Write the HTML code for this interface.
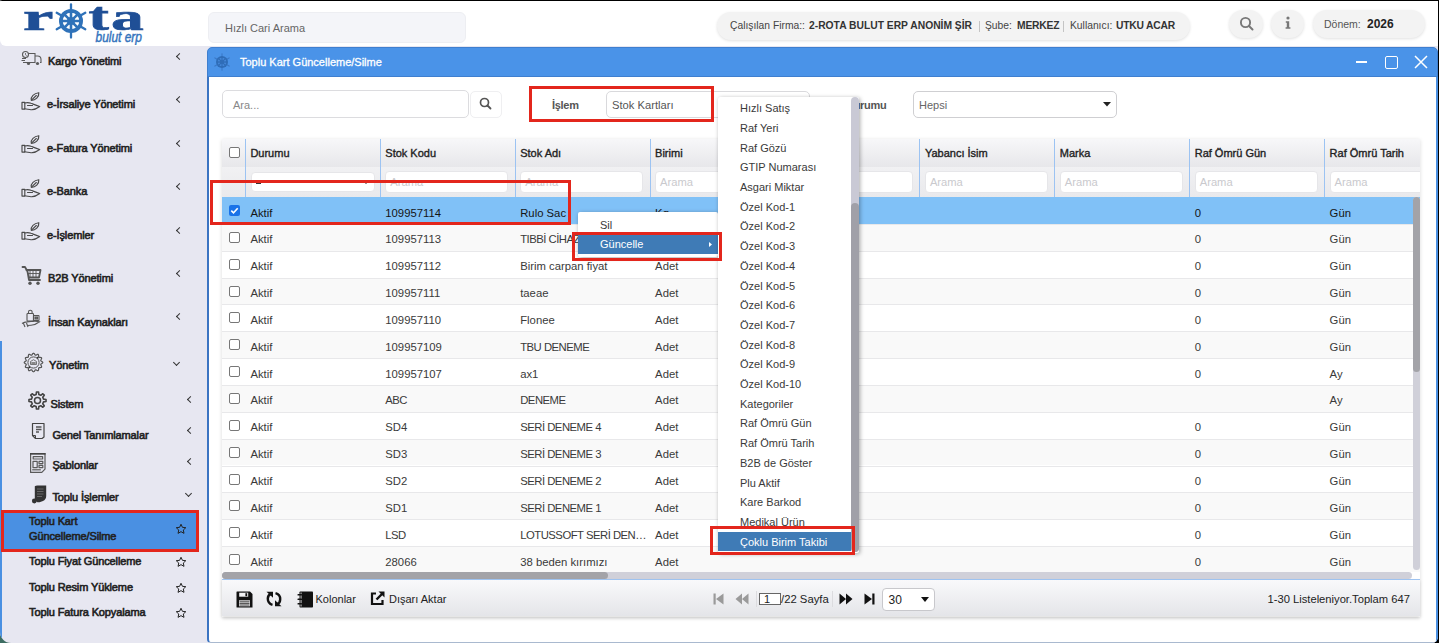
<!DOCTYPE html>
<html><head><meta charset="utf-8">
<style>
*{box-sizing:border-box;margin:0;padding:0}
html,body{width:1439px;height:643px;overflow:hidden;background:#000;font-family:"Liberation Sans",sans-serif;color:#222}
.a{position:absolute}
.t{position:absolute;white-space:nowrap;line-height:1}
#app{position:absolute;left:0;top:0;width:1438px;height:643px;background:#e7e7f1;border-radius:2px 0 6px 11px;overflow:hidden}
#corner{position:absolute;left:0;top:620px;width:30px;height:23px;background:#3d6d62}
.sb{font-weight:400;font-size:11px;letter-spacing:-0.12px;color:#222;-webkit-text-stroke:0.6px #222}
.chev{position:absolute;width:5px;height:5px;border-left:1.3px solid #333;border-bottom:1.3px solid #333;transform:rotate(45deg)}
.chevd{position:absolute;width:5px;height:5px;border-left:1.3px solid #333;border-bottom:1.3px solid #333;transform:rotate(-45deg)}
.cell{position:absolute;white-space:nowrap;line-height:1;font-size:11.3px;color:#3a3a3a}
.hd{position:absolute;white-space:nowrap;line-height:1;font-size:11px;font-weight:400;letter-spacing:0px;color:#222;-webkit-text-stroke:0.35px #222}
.flt{position:absolute;height:21px;background:#fff;border:1px solid #e6e6e9;border-radius:4px}
.ph{position:absolute;white-space:nowrap;line-height:1;font-size:11.2px;color:#c9c9cd}
.cb{position:absolute;width:11px;height:11px;border:1px solid #777;border-radius:2px;background:#fff}
.mi{position:absolute;white-space:nowrap;line-height:1;font-size:11px;color:#3a3a3a}
.star{position:absolute}
</style></head><body>
<div id="corner"></div>
<div id="app">

<div class="a" style="left:0;top:0;width:1438px;height:46px;background:#fff;border-radius:0 0 0 6px"></div>
<svg class="a" style="left:20px;top:2px" width="130" height="43" viewBox="0 0 130 43">
 <g font-family="Liberation Serif" font-weight="700" font-size="36" fill="#1f4f96" stroke="#1f4f96" stroke-width="0.6">
 <text x="3" y="28" textLength="30.5" lengthAdjust="spacingAndGlyphs" transform="translate(0,28) scale(1,1.04) translate(0,-28)">r</text>
 <text x="68.6" y="28" textLength="20.4" lengthAdjust="spacingAndGlyphs" transform="translate(0,28.5) scale(1,1.14) translate(0,-28.5)">t</text>
 <text x="91" y="28" textLength="32.8" lengthAdjust="spacingAndGlyphs" transform="translate(0,28) scale(1,1.04) translate(0,-28)">a</text>
 </g>
 <g transform="translate(51,19)">
  <g stroke="#2f72b9" stroke-width="2.3" stroke-linecap="round">
   <line x1="0" y1="-16.5" x2="0" y2="16.5"/>
   <line x1="-14.3" y1="-8.25" x2="14.3" y2="8.25"/>
   <line x1="-14.3" y1="8.25" x2="14.3" y2="-8.25"/>
  </g>
  <circle r="12" fill="#2f72b9"/>
  <circle r="8.3" fill="#fff"/>
  <g stroke="#2f72b9" stroke-width="2.6">
   <line x1="0" y1="-9" x2="0" y2="9"/><line x1="-9" y1="0" x2="9" y2="0"/>
   <line x1="-6.4" y1="-6.4" x2="6.4" y2="6.4"/><line x1="-6.4" y1="6.4" x2="6.4" y2="-6.4"/>
  </g>
  <circle r="4" fill="#2f72b9"/>
 </g>
 <text x="75.5" y="40" font-family="Liberation Sans" font-style="italic" font-size="14.5" fill="#3474bd" stroke="#3474bd" stroke-width="0.45" textLength="46.5" lengthAdjust="spacingAndGlyphs">bulut erp</text>
</svg>
<div class="a" style="left:208px;top:12px;width:258px;height:30.5px;background:#f4f5f9;border:1px solid #edeef2;border-radius:6px"></div>
<div class="t" style="left:225px;top:23px;font-size:11px;color:#666">Hızlı Cari Arama</div>
<div class="a" style="left:717px;top:12px;width:473px;height:28px;background:#f3f3f3;border-radius:14px;box-shadow:0 1px 3px rgba(0,0,0,0.12)"></div>
<div class="t" style="left:730px;top:21px;font-size:10.3px;color:#444">Çalışılan Firma::</div>
<div class="t" style="left:809px;top:21px;font-size:10.3px;font-weight:700;color:#333;letter-spacing:0px">2-ROTA BULUT ERP ANONİM ŞİR</div>
<div class="a" style="left:979px;top:20.5px;width:1px;height:11px;background:#c4c4c4"></div>
<div class="t" style="left:985px;top:21px;font-size:10.3px;color:#444">Şube:</div>
<div class="t" style="left:1017px;top:21px;font-size:10.3px;font-weight:700;color:#333;letter-spacing:-0.2px">MERKEZ</div>
<div class="a" style="left:1063px;top:20.5px;width:1px;height:11px;background:#c4c4c4"></div>
<div class="t" style="left:1070px;top:21px;font-size:10.3px;color:#444">Kullanıcı:</div>
<div class="t" style="left:1116px;top:21px;font-size:10.3px;font-weight:700;color:#333;letter-spacing:-0.2px">UTKU ACAR</div>
<div class="a" style="left:1229px;top:10px;width:34px;height:28px;background:#f3f3f3;border-radius:14px;box-shadow:0 1px 3px rgba(0,0,0,0.12)"></div>
<svg class="a" style="left:1239px;top:16px" width="16" height="16" viewBox="0 0 16 16"><circle cx="6.5" cy="6.5" r="4.6" fill="none" stroke="#777" stroke-width="1.9"/><line x1="10" y1="10" x2="13.5" y2="13.5" stroke="#777" stroke-width="2" stroke-linecap="round"/></svg>
<div class="a" style="left:1271px;top:10px;width:33px;height:28px;background:#f3f3f3;border-radius:14px;box-shadow:0 1px 3px rgba(0,0,0,0.12)"></div>
<svg class="a" style="left:1282px;top:16px" width="12" height="14" viewBox="0 0 12 14"><circle cx="6" cy="2" r="1.6" fill="#777"/><path d="M3.8 5.2h3.4v6h1.2v1.6H3.6v-1.6h1.2V6.8h-1z" fill="#777"/></svg>
<div class="a" style="left:1313px;top:10px;width:112px;height:28px;background:#f3f3f3;border-radius:14px;box-shadow:0 1px 3px rgba(0,0,0,0.12)"></div>
<div class="t" style="left:1324px;top:19px;font-size:10.5px;color:#555">Dönem:</div>
<div class="t" style="left:1367px;top:18px;font-size:12px;font-weight:700;color:#222">2026</div>
<div class="a" style="left:0;top:341px;width:2px;height:301px;background:#4a90e2"></div>
<div class="t sb" style="left:48px;top:55.8px">Kargo Yönetimi</div>
<div class="chev" style="left:177px;top:53.5px"></div>
<div class="t sb" style="left:47px;top:99.3px">e-İrsaliye Yönetimi</div>
<div class="chev" style="left:177px;top:97.0px"></div>
<div class="t sb" style="left:47px;top:142.8px">e-Fatura Yönetimi</div>
<div class="chev" style="left:177px;top:140.5px"></div>
<div class="t sb" style="left:47px;top:186.3px">e-Banka</div>
<div class="chev" style="left:177px;top:184.0px"></div>
<div class="t sb" style="left:47px;top:229.8px">e-İşlemler</div>
<div class="chev" style="left:177px;top:227.5px"></div>
<div class="t sb" style="left:48px;top:273.1px">B2B Yönetimi</div>
<div class="chev" style="left:177px;top:270.8px"></div>
<div class="t sb" style="left:48px;top:316.5px">İnsan Kaynakları</div>
<div class="chev" style="left:177px;top:314.2px"></div>
<div class="t sb" style="left:49px;top:359.8px">Yönetim</div>
<div class="chevd" style="left:174px;top:359.5px"></div>
<div class="t sb" style="left:50.5px;top:398.7px">Sistem</div>
<div class="chev" style="left:188px;top:397.3px"></div>
<div class="t sb" style="left:52.4px;top:429.59999999999997px">Genel Tanımlamalar</div>
<div class="chev" style="left:188px;top:428.2px"></div>
<div class="t sb" style="left:52.4px;top:460.4px">Şablonlar</div>
<div class="chev" style="left:188px;top:459px"></div>
<div class="t sb" style="left:52.4px;top:491.7px">Toplu İşlemler</div>
<div class="chevd" style="left:185.5px;top:491.3px"></div>
<svg class="a" style="left:21px;top:50px" width="21" height="16" viewBox="0 0 21 16"><g fill="none" stroke="#5a5a5a" stroke-width="1.1"><circle cx="4.5" cy="4.5" r="3"/><path d="M7 3.5h7v9H6"/><path d="M14 6h2.5a3.5 3.5 0 0 1 3.5 3.5v3h-1"/><path d="M1 8.5h4M0.5 10.5h3.5M2 12.5h4" /></g><circle cx="7.5" cy="13.5" r="1.6" fill="#5a5a5a"/><circle cx="16.5" cy="13.5" r="1.6" fill="#5a5a5a"/><path d="M4.5 3v1.8l1.2 0.8" stroke="#5a5a5a" stroke-width="0.8" fill="none"/></svg>
<svg class="a" style="left:21px;top:90.5px" width="20" height="21" viewBox="0 0 20 21"><g fill="none" stroke="#4a4a4a" stroke-width="1.15" stroke-linejoin="round" stroke-linecap="round"><path d="M10.3 9.4C9.5 5.5 13 2.3 17.8 1.7C18.3 6 14.5 9.2 10.3 9.4Z"/><path d="M11 8.7L15.3 4.5"/><rect x="1" y="11.3" width="2.8" height="6.8"/><path d="M3.8 12C6 11.3 8 11.5 10 12.3C12 13 14 14 18.7 15.5C16 17.6 13 18.9 10 18.7C8 18.6 6 17.9 3.8 17.7"/><path d="M6.5 14.5H11.5"/></g></svg>
<svg class="a" style="left:21px;top:134px" width="20" height="21" viewBox="0 0 20 21"><g fill="none" stroke="#4a4a4a" stroke-width="1.15" stroke-linejoin="round" stroke-linecap="round"><path d="M10.3 9.4C9.5 5.5 13 2.3 17.8 1.7C18.3 6 14.5 9.2 10.3 9.4Z"/><path d="M11 8.7L15.3 4.5"/><rect x="1" y="11.3" width="2.8" height="6.8"/><path d="M3.8 12C6 11.3 8 11.5 10 12.3C12 13 14 14 18.7 15.5C16 17.6 13 18.9 10 18.7C8 18.6 6 17.9 3.8 17.7"/><path d="M6.5 14.5H11.5"/></g></svg>
<svg class="a" style="left:21px;top:177.5px" width="20" height="21" viewBox="0 0 20 21"><g fill="none" stroke="#4a4a4a" stroke-width="1.15" stroke-linejoin="round" stroke-linecap="round"><path d="M10.3 9.4C9.5 5.5 13 2.3 17.8 1.7C18.3 6 14.5 9.2 10.3 9.4Z"/><path d="M11 8.7L15.3 4.5"/><rect x="1" y="11.3" width="2.8" height="6.8"/><path d="M3.8 12C6 11.3 8 11.5 10 12.3C12 13 14 14 18.7 15.5C16 17.6 13 18.9 10 18.7C8 18.6 6 17.9 3.8 17.7"/><path d="M6.5 14.5H11.5"/></g></svg>
<svg class="a" style="left:21px;top:221px" width="20" height="21" viewBox="0 0 20 21"><g fill="none" stroke="#4a4a4a" stroke-width="1.15" stroke-linejoin="round" stroke-linecap="round"><path d="M10.3 9.4C9.5 5.5 13 2.3 17.8 1.7C18.3 6 14.5 9.2 10.3 9.4Z"/><path d="M11 8.7L15.3 4.5"/><rect x="1" y="11.3" width="2.8" height="6.8"/><path d="M3.8 12C6 11.3 8 11.5 10 12.3C12 13 14 14 18.7 15.5C16 17.6 13 18.9 10 18.7C8 18.6 6 17.9 3.8 17.7"/><path d="M6.5 14.5H11.5"/></g></svg>
<svg class="a" style="left:21px;top:265px" width="21" height="21" viewBox="0 0 21 21"><g fill="none" stroke="#555" stroke-width="1.8" stroke-linecap="round" stroke-linejoin="round"><path d="M1.5 2h2.5l2.5 4.5l1.5 8.5h11"/><path d="M5.5 5h14l-1.5 7.5H8"/></g><g stroke="#555" stroke-width="0.9"><path d="M9 5.5v7M12 5.5v7M15 5.5v7M6.5 8.5h12.5"/></g><circle cx="9" cy="18.2" r="1.7" fill="#555"/><circle cx="17" cy="18.2" r="1.7" fill="#555"/></svg>
<svg class="a" style="left:21px;top:309px" width="21" height="20" viewBox="0 0 21 20"><g fill="none" stroke="#555" stroke-width="1.1"><path d="M7.5 4.5V3a1.8 1.8 0 0 1 3.6 0v1.5"/><rect x="6" y="4.5" width="6.5" height="7.5" rx="0.8"/><rect x="12.5" y="6.5" width="5.5" height="5" rx="0.5"/><rect x="14" y="8" width="2.5" height="2" fill="#777"/><path d="M1 14.5c1.5-1 3-1.5 5-1.6l4 -0.4c2 0 4 -0.8 8.5 0.3c-2.5 2-5 3.3-8.5 3.4l-3.5 0.3M2.5 14.5l1.5 3.5M5.5 14l1.5 4"/></g></svg>
<svg class="a" style="left:22.5px;top:352px" width="21" height="21" viewBox="0 0 21 21"><path d="M10.50 1.20 L11.09 1.48 L11.60 2.17 L12.01 2.89 L12.44 3.26 L13.00 3.15 L13.71 2.74 L14.50 2.40 L15.15 2.45 L15.52 2.99 L15.61 3.84 L15.62 4.66 L15.80 5.20 L16.34 5.38 L17.16 5.39 L18.01 5.48 L18.55 5.85 L18.60 6.50 L18.26 7.29 L17.85 8.00 L17.74 8.56 L18.11 8.99 L18.83 9.40 L19.52 9.91 L19.80 10.50 L19.52 11.09 L18.83 11.60 L18.11 12.01 L17.74 12.44 L17.85 13.00 L18.26 13.71 L18.60 14.50 L18.55 15.15 L18.01 15.52 L17.16 15.61 L16.34 15.62 L15.80 15.80 L15.62 16.34 L15.61 17.16 L15.52 18.01 L15.15 18.55 L14.50 18.60 L13.71 18.26 L13.00 17.85 L12.44 17.74 L12.01 18.11 L11.60 18.83 L11.09 19.52 L10.50 19.80 L9.91 19.52 L9.40 18.83 L8.99 18.11 L8.56 17.74 L8.00 17.85 L7.29 18.26 L6.50 18.60 L5.85 18.55 L5.48 18.01 L5.39 17.16 L5.38 16.34 L5.20 15.80 L4.66 15.62 L3.84 15.61 L2.99 15.52 L2.45 15.15 L2.40 14.50 L2.74 13.71 L3.15 13.00 L3.26 12.44 L2.89 12.01 L2.17 11.60 L1.48 11.09 L1.20 10.50 L1.48 9.91 L2.17 9.40 L2.89 8.99 L3.26 8.56 L3.15 8.00 L2.74 7.29 L2.40 6.50 L2.45 5.85 L2.99 5.48 L3.84 5.39 L4.66 5.38 L5.20 5.20 L5.38 4.66 L5.39 3.84 L5.48 2.99 L5.85 2.45 L6.50 2.40 L7.29 2.74 L8.00 3.15 L8.56 3.26 L8.99 2.89 L9.40 2.17 L9.91 1.48 L10.50 1.20Z" fill="none" stroke="#555" stroke-width="1.2" stroke-linejoin="round"/><circle cx="10.5" cy="10.5" r="5.6" fill="none" stroke="#555" stroke-width="1"/><path d="M7.5 12.5v-3l3-1.8l3 1.8v3z" fill="none" stroke="#666" stroke-width="0.9"/><rect x="8.3" y="10" width="4.4" height="2.2" fill="#888"/><circle cx="14.6" cy="5.8" r="1" fill="#333"/><circle cx="6.4" cy="15.2" r="1" fill="#333"/></svg>
<svg class="a" style="left:27.5px;top:390.5px" width="19" height="19" viewBox="0 0 19 19"><path d="M8.15 3.45 L8.47 0.96 L10.53 0.96 L10.85 3.45 L12.82 4.26 L14.81 2.73 L16.27 4.19 L14.74 6.18 L15.55 8.15 L18.04 8.47 L18.04 10.53 L15.55 10.85 L14.74 12.82 L16.27 14.81 L14.81 16.27 L12.82 14.74 L10.85 15.55 L10.53 18.04 L8.47 18.04 L8.15 15.55 L6.18 14.74 L4.19 16.27 L2.73 14.81 L4.26 12.82 L3.45 10.85 L0.96 10.53 L0.96 8.47 L3.45 8.15 L4.26 6.18 L2.73 4.19 L4.19 2.73 L6.18 4.26Z" fill="none" stroke="#444" stroke-width="1.6" stroke-linejoin="round"/><circle cx="9.5" cy="9.5" r="3" fill="none" stroke="#444" stroke-width="1.5"/></svg>
<svg class="a" style="left:30.5px;top:422px" width="15" height="18" viewBox="0 0 15 18"><path d="M1.5 1.5h11.5v13.5l-2 1.5H4.5l-3-3z" fill="none" stroke="#444" stroke-width="1.2" stroke-linejoin="round"/><path d="M1.5 13.5h3v3" fill="none" stroke="#444" stroke-width="1"/><path d="M5 5h5.5M5 7.5h5.5M5 10h3" stroke="#555" stroke-width="1.3"/></svg>
<svg class="a" style="left:29px;top:451.5px" width="18" height="22" viewBox="0 0 18 22"><g fill="none" stroke="#5a5a5a" stroke-width="1.2" stroke-linejoin="round"><path d="M1.6 1.6h14.4v15.5l-3.2 3.3H1.6z"/><rect x="4.2" y="4.6" width="9.4" height="2.4"/><rect x="4" y="9.4" width="4.2" height="6.2"/><rect x="10" y="9.4" width="3.8" height="2.2"/><rect x="10" y="13.4" width="3.8" height="2.2"/><path d="M3.2 17.8h8.6"/></g><rect x="1" y="1" width="15.6" height="1.6" fill="#444"/></svg>
<svg class="a" style="left:30px;top:483.5px" width="18" height="20" viewBox="0 0 18 20"><path d="M4.8 2.2c0.6-0.5 1.5-0.7 2.5-0.7h8.9v10.5c0 2.5-1.2 4.2-3.2 4.9l-3.5 1.3c-1.5 0.5-3.3-0.4-3.9-1.8L4.8 15z" fill="#333"/><path d="M7 5h6.5M7 7.5h6.5M7 10h6.5M7 12.5h5" stroke="#666" stroke-width="1.1"/><circle cx="4.3" cy="17" r="2.4" fill="#333"/></svg>
<div class="a" style="left:1px;top:509.5px;width:198px;height:42.5px;background:#4a90e2;border:3px solid #e3261c"></div>
<div class="t sb" style="left:29px;top:516px">Toplu Kart</div>
<div class="t sb" style="left:29px;top:531px">Güncelleme/Silme</div>
<svg class="star" style="left:175px;top:522.5px" width="12" height="12" viewBox="0 0 24 24"><path d="M12 2.5l2.9 6.2 6.7.7-5 4.6 1.4 6.7L12 17.3l-5.9 3.4 1.4-6.7-5-4.6 6.7-.7z" fill="none" stroke="#222" stroke-width="2" stroke-linejoin="round"/></svg>
<div class="t sb" style="left:29px;top:556.4px">Toplu Fiyat Güncelleme</div>
<svg class="star" style="left:175px;top:556px" width="12" height="12" viewBox="0 0 24 24"><path d="M12 2.5l2.9 6.2 6.7.7-5 4.6 1.4 6.7L12 17.3l-5.9 3.4 1.4-6.7-5-4.6 6.7-.7z" fill="none" stroke="#222" stroke-width="2" stroke-linejoin="round"/></svg>
<div class="t sb" style="left:29px;top:582.1px">Toplu Resim Yükleme</div>
<svg class="star" style="left:175px;top:581.7px" width="12" height="12" viewBox="0 0 24 24"><path d="M12 2.5l2.9 6.2 6.7.7-5 4.6 1.4 6.7L12 17.3l-5.9 3.4 1.4-6.7-5-4.6 6.7-.7z" fill="none" stroke="#222" stroke-width="2" stroke-linejoin="round"/></svg>
<div class="t sb" style="left:29px;top:607.1999999999999px">Toplu Fatura Kopyalama</div>
<svg class="star" style="left:175px;top:606.8px" width="12" height="12" viewBox="0 0 24 24"><path d="M12 2.5l2.9 6.2 6.7.7-5 4.6 1.4 6.7L12 17.3l-5.9 3.4 1.4-6.7-5-4.6 6.7-.7z" fill="none" stroke="#222" stroke-width="2" stroke-linejoin="round"/></svg>
<div class="a" style="left:207px;top:60px;width:1231px;height:583px;background:#fff;border-left:2px solid #3b74c2;border-right:2px solid #4a90e2;border-bottom:1px solid #a9b9cf;border-radius:0 0 3px 4px"></div>
<div class="a" style="left:207px;top:46.5px;width:1231px;height:30.3px;background:#4a93e8;border:1px solid #3f7fcf;border-bottom:1px solid #3f7fcf;border-radius:5px 5px 0 0"></div>
<svg class="a" style="left:212px;top:51.5px" width="20" height="20" viewBox="-10 -10 20 20"><g stroke="#3a78c6" stroke-width="1.1" stroke-linecap="round"><line x1="0" y1="-8.2" x2="0" y2="8.2"/><line x1="-7.1" y1="-4.1" x2="7.1" y2="4.1"/><line x1="-7.1" y1="4.1" x2="7.1" y2="-4.1"/></g><circle r="6" fill="#2f6db8"/><circle r="4" fill="#4a8ee0"/><g stroke="#2f6db8" stroke-width="1.3"><line x1="0" y1="-4.3" x2="0" y2="4.3"/><line x1="-4.3" y1="0" x2="4.3" y2="0"/><line x1="-3" y1="-3" x2="3" y2="3"/><line x1="-3" y1="3" x2="3" y2="-3"/></g><circle r="1.9" fill="#2f6db8"/></svg>
<div class="t" style="left:240px;top:57px;font-size:11px;color:#fff;-webkit-text-stroke:0.3px #fff">Toplu Kart Güncelleme/Silme</div>
<div class="a" style="left:1356px;top:61px;width:11px;height:2px;background:#fff"></div>
<div class="a" style="left:1385px;top:55.5px;width:13px;height:13px;border:1.5px solid #fff;border-radius:2px"></div>
<svg class="a" style="left:1414px;top:55px" width="14" height="14" viewBox="0 0 14 14"><path d="M1 1L13 13M13 1L1 13" stroke="#fff" stroke-width="1.5"/></svg>
<div class="a" style="left:222px;top:90px;width:247px;height:28px;background:#fff;border:1px solid #dcdcdf;border-radius:5px"></div>
<div class="t" style="left:233px;top:99.8px;font-size:11px;color:#888">Ara...</div>
<div class="a" style="left:470px;top:91px;width:32px;height:27px;background:#fff;border:1px solid #efeff1;border-radius:5px"></div>
<svg class="a" style="left:479px;top:97px" width="13" height="13" viewBox="0 0 13 13"><circle cx="5.5" cy="5.5" r="4" fill="none" stroke="#555" stroke-width="1.7"/><line x1="8.5" y1="8.5" x2="11.5" y2="11.5" stroke="#555" stroke-width="1.8" stroke-linecap="round"/></svg>
<div class="t" style="left:552px;top:99.8px;font-size:11px;font-weight:700;color:#555;letter-spacing:-0.3px">İşlem</div>
<div class="a" style="left:606px;top:91px;width:204px;height:27px;background:#fff;border:1px solid #d9d9dc;border-radius:5px"></div>
<div class="t" style="left:612px;top:99.8px;font-size:11.2px;color:#555">Stok Kartları</div>
<div class="t" style="left:846px;top:99.8px;font-size:11px;font-weight:700;color:#555;letter-spacing:-0.3px">Durumu</div>
<div class="a" style="left:913px;top:91px;width:204px;height:27px;background:#fff;border:1px solid #cfcfd2;border-radius:5px"></div>
<div class="t" style="left:919px;top:99.8px;font-size:11px;color:#666">Hepsi</div>
<svg class="a" style="left:1102.5px;top:101.5px" width="8" height="5" viewBox="0 0 8 5"><path d="M0 0h8L4 4.5z" fill="#222"/></svg>
<div class="a" style="left:529px;top:86px;width:185px;height:36px;border:3px solid #e3261c"></div>
<div class="a" style="left:222px;top:139px;width:1198px;height:478px;background:#fff;box-shadow:0 1px 4px rgba(0,0,0,0.15)"></div>
<div class="a" style="left:222px;top:139px;width:1198px;height:28px;background:linear-gradient(#f7f7f9,#e7e7ea)"></div>
<div class="a" style="left:222px;top:167px;width:1198px;height:30px;background:linear-gradient(#f1f1f3,#e9e9ec)"></div>
<div class="a" style="left:245px;top:139px;width:1px;height:58px;background:#9cc3f2"></div>
<div class="a" style="left:380px;top:139px;width:1px;height:58px;background:#9cc3f2"></div>
<div class="a" style="left:515px;top:139px;width:1px;height:58px;background:#9cc3f2"></div>
<div class="a" style="left:650px;top:139px;width:1px;height:58px;background:#9cc3f2"></div>
<div class="a" style="left:785px;top:139px;width:1px;height:58px;background:#9cc3f2"></div>
<div class="a" style="left:919px;top:139px;width:1px;height:58px;background:#9cc3f2"></div>
<div class="a" style="left:1054px;top:139px;width:1px;height:58px;background:#9cc3f2"></div>
<div class="a" style="left:1189px;top:139px;width:1px;height:58px;background:#9cc3f2"></div>
<div class="a" style="left:1324px;top:139px;width:1px;height:58px;background:#9cc3f2"></div>
<div class="cb" style="left:229px;top:147px"></div>
<div class="hd" style="left:250.4px;top:147.8px">Durumu</div>
<div class="hd" style="left:385.3px;top:147.8px">Stok Kodu</div>
<div class="hd" style="left:520.2px;top:147.8px">Stok Adı</div>
<div class="hd" style="left:655.1px;top:147.8px">Birimi</div>
<div class="hd" style="left:924.9px;top:147.8px">Yabancı İsim</div>
<div class="hd" style="left:1059.8px;top:147.8px">Marka</div>
<div class="hd" style="left:1194.7px;top:147.8px">Raf Ömrü Gün</div>
<div class="hd" style="left:1329.6px;top:147.8px">Raf Ömrü Tarih</div>
<div class="flt" style="left:251px;top:172px;width:123.5px;height:20px"></div>
<div class="a" style="left:256px;top:182px;width:5px;height:1.5px;background:#333"></div>
<svg class="a" style="left:363px;top:181px" width="6" height="3" viewBox="0 0 6 3"><path d="M0 0h6L3 3z" fill="#333"/></svg>
<div class="a" style="left:222px;top:167px;width:1198px;height:30px;overflow:hidden">
<div class="flt" style="left:163.3px;top:4.3px;width:123px;height:21.5px"></div>
<div class="ph" style="left:168.3px;top:10.2px">Arama</div>
<div class="flt" style="left:298.2px;top:4.3px;width:123px;height:21.5px"></div>
<div class="ph" style="left:303.2px;top:10.2px">Arama</div>
<div class="flt" style="left:433.1px;top:4.3px;width:123px;height:21.5px"></div>
<div class="ph" style="left:438.1px;top:10.2px">Arama</div>
<div class="flt" style="left:568.0px;top:4.3px;width:123px;height:21.5px"></div>
<div class="ph" style="left:573.0px;top:10.2px">Arama</div>
<div class="flt" style="left:702.9px;top:4.3px;width:123px;height:21.5px"></div>
<div class="ph" style="left:707.9px;top:10.2px">Arama</div>
<div class="flt" style="left:837.8px;top:4.3px;width:123px;height:21.5px"></div>
<div class="ph" style="left:842.8px;top:10.2px">Arama</div>
<div class="flt" style="left:972.7px;top:4.3px;width:123px;height:21.5px"></div>
<div class="ph" style="left:977.7px;top:10.2px">Arama</div>
<div class="flt" style="left:1107.6px;top:4.3px;width:123px;height:21.5px"></div>
<div class="ph" style="left:1112.6px;top:10.2px">Arama</div>
</div>
<div class="a" style="left:222px;top:197px;width:1198px;height:375px;overflow:hidden">
<div class="a" style="left:0;top:0.00px;width:1198px;height:26.85px;background:#80c1f7;"></div>
<svg class="a" style="left:7px;top:8.00px" width="11" height="11" viewBox="0 0 11 11"><rect width="11" height="11" rx="2" fill="#1a73e8"/><path d="M2.3 5.6l2.2 2.2 4.2-4.6" fill="none" stroke="#fff" stroke-width="1.6"/></svg>
<div class="cell" style="left:28.4px;top:10.50px;color:#151515">Aktif</div>
<div class="cell" style="left:163.3px;top:10.50px;color:#151515">109957114</div>
<div class="cell" style="left:298.2px;top:10.50px;color:#151515">Rulo Sac</div>
<div class="cell" style="left:433.1px;top:10.50px;color:#151515">Kg</div>
<div class="cell" style="left:972.7px;top:10.50px;color:#151515">0</div>
<div class="cell" style="left:1107.6px;top:10.50px;color:#151515">Gün</div>
<div class="a" style="left:0;top:26.85px;width:1198px;height:26.85px;background:#f9f9f9;border-top:1px solid #e8e8ea;"></div>
<div class="cb" style="left:7px;top:34.85px"></div>
<div class="cell" style="left:28.4px;top:37.35px">Aktif</div>
<div class="cell" style="left:163.3px;top:37.35px">109957113</div>
<div class="cell" style="left:298.2px;top:37.35px;letter-spacing:-0.5px">TIBBİ CİHAZ</div>
<div class="cell" style="left:433.1px;top:37.35px">Adet</div>
<div class="cell" style="left:972.7px;top:37.35px">0</div>
<div class="cell" style="left:1107.6px;top:37.35px">Gün</div>
<div class="a" style="left:0;top:53.70px;width:1198px;height:26.85px;background:#fff;border-top:1px solid #e8e8ea;"></div>
<div class="cb" style="left:7px;top:61.70px"></div>
<div class="cell" style="left:28.4px;top:64.20px">Aktif</div>
<div class="cell" style="left:163.3px;top:64.20px">109957112</div>
<div class="cell" style="left:298.2px;top:64.20px">Birim carpan fiyat</div>
<div class="cell" style="left:433.1px;top:64.20px">Adet</div>
<div class="cell" style="left:972.7px;top:64.20px">0</div>
<div class="cell" style="left:1107.6px;top:64.20px">Gün</div>
<div class="a" style="left:0;top:80.55px;width:1198px;height:26.85px;background:#f9f9f9;border-top:1px solid #e8e8ea;"></div>
<div class="cb" style="left:7px;top:88.55px"></div>
<div class="cell" style="left:28.4px;top:91.05px">Aktif</div>
<div class="cell" style="left:163.3px;top:91.05px">109957111</div>
<div class="cell" style="left:298.2px;top:91.05px">taeae</div>
<div class="cell" style="left:433.1px;top:91.05px">Adet</div>
<div class="cell" style="left:972.7px;top:91.05px">0</div>
<div class="cell" style="left:1107.6px;top:91.05px">Gün</div>
<div class="a" style="left:0;top:107.40px;width:1198px;height:26.85px;background:#fff;border-top:1px solid #e8e8ea;"></div>
<div class="cb" style="left:7px;top:115.40px"></div>
<div class="cell" style="left:28.4px;top:117.90px">Aktif</div>
<div class="cell" style="left:163.3px;top:117.90px">109957110</div>
<div class="cell" style="left:298.2px;top:117.90px">Flonee</div>
<div class="cell" style="left:433.1px;top:117.90px">Adet</div>
<div class="cell" style="left:972.7px;top:117.90px">0</div>
<div class="cell" style="left:1107.6px;top:117.90px">Gün</div>
<div class="a" style="left:0;top:134.25px;width:1198px;height:26.85px;background:#f9f9f9;border-top:1px solid #e8e8ea;"></div>
<div class="cb" style="left:7px;top:142.25px"></div>
<div class="cell" style="left:28.4px;top:144.75px">Aktif</div>
<div class="cell" style="left:163.3px;top:144.75px">109957109</div>
<div class="cell" style="left:298.2px;top:144.75px;letter-spacing:-0.5px">TBU DENEME</div>
<div class="cell" style="left:433.1px;top:144.75px">Adet</div>
<div class="cell" style="left:972.7px;top:144.75px">0</div>
<div class="cell" style="left:1107.6px;top:144.75px">Gün</div>
<div class="a" style="left:0;top:161.10px;width:1198px;height:26.85px;background:#fff;border-top:1px solid #e8e8ea;"></div>
<div class="cb" style="left:7px;top:169.10px"></div>
<div class="cell" style="left:28.4px;top:171.60px">Aktif</div>
<div class="cell" style="left:163.3px;top:171.60px">109957107</div>
<div class="cell" style="left:298.2px;top:171.60px">ax1</div>
<div class="cell" style="left:433.1px;top:171.60px">Adet</div>
<div class="cell" style="left:972.7px;top:171.60px">0</div>
<div class="cell" style="left:1107.6px;top:171.60px">Ay</div>
<div class="a" style="left:0;top:187.95px;width:1198px;height:26.85px;background:#f9f9f9;border-top:1px solid #e8e8ea;"></div>
<div class="cb" style="left:7px;top:195.95px"></div>
<div class="cell" style="left:28.4px;top:198.45px">Aktif</div>
<div class="cell" style="left:163.3px;top:198.45px;letter-spacing:-0.5px">ABC</div>
<div class="cell" style="left:298.2px;top:198.45px;letter-spacing:-0.5px">DENEME</div>
<div class="cell" style="left:433.1px;top:198.45px">Adet</div>
<div class="cell" style="left:972.7px;top:198.45px"></div>
<div class="cell" style="left:1107.6px;top:198.45px">Ay</div>
<div class="a" style="left:0;top:214.80px;width:1198px;height:26.85px;background:#fff;border-top:1px solid #e8e8ea;"></div>
<div class="cb" style="left:7px;top:222.80px"></div>
<div class="cell" style="left:28.4px;top:225.30px">Aktif</div>
<div class="cell" style="left:163.3px;top:225.30px">SD4</div>
<div class="cell" style="left:298.2px;top:225.30px;letter-spacing:-0.5px">SERİ DENEME 4</div>
<div class="cell" style="left:433.1px;top:225.30px">Adet</div>
<div class="cell" style="left:972.7px;top:225.30px">0</div>
<div class="cell" style="left:1107.6px;top:225.30px">Gün</div>
<div class="a" style="left:0;top:241.65px;width:1198px;height:26.85px;background:#f9f9f9;border-top:1px solid #e8e8ea;"></div>
<div class="cb" style="left:7px;top:249.65px"></div>
<div class="cell" style="left:28.4px;top:252.15px">Aktif</div>
<div class="cell" style="left:163.3px;top:252.15px">SD3</div>
<div class="cell" style="left:298.2px;top:252.15px;letter-spacing:-0.5px">SERİ DENEME 3</div>
<div class="cell" style="left:433.1px;top:252.15px">Adet</div>
<div class="cell" style="left:972.7px;top:252.15px">0</div>
<div class="cell" style="left:1107.6px;top:252.15px">Gün</div>
<div class="a" style="left:0;top:268.50px;width:1198px;height:26.85px;background:#fff;border-top:1px solid #e8e8ea;"></div>
<div class="cb" style="left:7px;top:276.50px"></div>
<div class="cell" style="left:28.4px;top:279.00px">Aktif</div>
<div class="cell" style="left:163.3px;top:279.00px">SD2</div>
<div class="cell" style="left:298.2px;top:279.00px;letter-spacing:-0.5px">SERİ DENEME 2</div>
<div class="cell" style="left:433.1px;top:279.00px">Adet</div>
<div class="cell" style="left:972.7px;top:279.00px">0</div>
<div class="cell" style="left:1107.6px;top:279.00px">Gün</div>
<div class="a" style="left:0;top:295.35px;width:1198px;height:26.85px;background:#f9f9f9;border-top:1px solid #e8e8ea;"></div>
<div class="cb" style="left:7px;top:303.35px"></div>
<div class="cell" style="left:28.4px;top:305.85px">Aktif</div>
<div class="cell" style="left:163.3px;top:305.85px">SD1</div>
<div class="cell" style="left:298.2px;top:305.85px;letter-spacing:-0.5px">SERİ DENEME 1</div>
<div class="cell" style="left:433.1px;top:305.85px">Adet</div>
<div class="cell" style="left:972.7px;top:305.85px">0</div>
<div class="cell" style="left:1107.6px;top:305.85px">Gün</div>
<div class="a" style="left:0;top:322.20px;width:1198px;height:26.85px;background:#fff;border-top:1px solid #e8e8ea;"></div>
<div class="cb" style="left:7px;top:330.20px"></div>
<div class="cell" style="left:28.4px;top:332.70px">Aktif</div>
<div class="cell" style="left:163.3px;top:332.70px;letter-spacing:-0.5px">LSD</div>
<div class="cell" style="left:298.2px;top:332.70px;letter-spacing:-0.5px">LOTUSSOFT SERİ DEN…</div>
<div class="cell" style="left:433.1px;top:332.70px">Adet</div>
<div class="cell" style="left:972.7px;top:332.70px">0</div>
<div class="cell" style="left:1107.6px;top:332.70px">Gün</div>
<div class="a" style="left:0;top:349.05px;width:1198px;height:26.85px;background:#f9f9f9;border-top:1px solid #e8e8ea;"></div>
<div class="cb" style="left:7px;top:357.05px"></div>
<div class="cell" style="left:28.4px;top:359.55px">Aktif</div>
<div class="cell" style="left:163.3px;top:359.55px">28066</div>
<div class="cell" style="left:298.2px;top:359.55px">38 beden kırımızı</div>
<div class="cell" style="left:433.1px;top:359.55px">Adet</div>
<div class="cell" style="left:972.7px;top:359.55px">0</div>
<div class="cell" style="left:1107.6px;top:359.55px">Gün</div>
</div>
<div class="a" style="left:1412.5px;top:197px;width:7px;height:373px;background:#d0d0d9;border-radius:4px"></div>
<div class="a" style="left:1412.5px;top:197px;width:7px;height:175px;background:#a3a3a8;border-radius:4px"></div>
<div class="a" style="left:222px;top:571.5px;width:1190px;height:7.5px;background:#d0d0d9;border-radius:4px"></div>
<div class="a" style="left:222px;top:571.5px;width:386px;height:7.5px;background:#a3a3a8;border-radius:4px"></div>
<div class="a" style="left:222px;top:579px;width:1198px;height:37px;border-top:1px solid #9fc3f0;background:linear-gradient(#f9f9fb,#e4e5e9);box-shadow:0 2px 3px rgba(0,0,0,0.12)"></div>
<svg class="a" style="left:235.5px;top:590.5px" width="17" height="17" viewBox="0 0 17 17"><path d="M1 0.5h13l2.5 2.5v13.5h-15.5a0.5 0.5 0 0 1-0.5-0.5v-15a0.5 0.5 0 0 1 0.5-0.5z" fill="#111"/><rect x="3.2" y="1.7" width="9" height="4" fill="#f2f2f4"/><rect x="9.4" y="2.2" width="1.8" height="3" fill="#111"/><rect x="3" y="9.3" width="11" height="6" fill="#e8e8ea"/><path d="M3.5 10.8h10M3.5 12.4h10M3.5 14h10" stroke="#333" stroke-width="0.9"/></svg>
<svg class="a" style="left:265px;top:591px" width="18" height="16" viewBox="0 0 18 16"><g fill="none" stroke="#111" stroke-width="2.4"><path d="M7.5 13.8C4.5 13 2.8 10.5 2.8 7.8C2.8 5.5 4 3.6 5.8 2.6"/><path d="M10.5 2.2C13.5 3 15.2 5.5 15.2 8.2C15.2 10.5 14 12.4 12.2 13.4"/></g><path d="M1.5 0.8h6.5v6z" fill="#111"/><path d="M16.5 15.2h-6.5v-6z" fill="#111"/></svg>
<svg class="a" style="left:296.5px;top:590.5px" width="17" height="17" viewBox="0 0 17 17"><rect x="2.5" y="0.5" width="13.5" height="16" rx="0.8" fill="#111"/><rect x="3.6" y="1.5" width="0.9" height="14" fill="#e6e6e8"/><g fill="#111"><rect x="0.5" y="3" width="4.5" height="1.6" rx="0.6"/><rect x="0.5" y="7.4" width="4.5" height="1.6" rx="0.6"/><rect x="0.5" y="11.9" width="4.5" height="1.6" rx="0.6"/></g></svg>
<div class="t" style="left:315.5px;top:594px;font-size:11px;color:#222">Kolonlar</div>
<svg class="a" style="left:370px;top:591px" width="15" height="15" viewBox="0 0 15 15"><path d="M6 2.5H2v10.5h10.5V9" fill="none" stroke="#111" stroke-width="2.2"/><path d="M8.5 0.5H14.5V6.5z" fill="#111"/><path d="M13 2L6.5 8.5" stroke="#111" stroke-width="2.4"/></svg>
<div class="t" style="left:389px;top:594px;font-size:11px;color:#222">Dışarı Aktar</div>
<svg class="a" style="left:713px;top:593px" width="11" height="12" viewBox="0 0 11 12"><rect x="0.5" y="0.5" width="2.2" height="11" fill="#9a9a9a"/><path d="M10.5 0.5v11L3 6z" fill="#9a9a9a"/></svg>
<svg class="a" style="left:735px;top:593px" width="14" height="12" viewBox="0 0 14 12"><path d="M7 0.5v11L0.5 6zM13.5 0.5v11L7 6z" fill="#9a9a9a"/></svg>
<div class="a" style="left:755.5px;top:591px;width:1px;height:16px;background:#dcdcdf"></div>
<div class="a" style="left:759px;top:593px;width:22px;height:12px;background:#fff;border:1px solid #666"></div>
<div class="t" style="left:764px;top:594px;font-size:11px;color:#222">1</div>
<div class="t" style="left:781px;top:594px;font-size:11.3px;color:#222">/22 Sayfa</div>
<div class="a" style="left:831.5px;top:591px;width:1px;height:16px;background:#dcdcdf"></div>
<svg class="a" style="left:839px;top:593px" width="14" height="12" viewBox="0 0 14 12"><path d="M0.5 0.5v11L7 6zM7 0.5v11L13.5 6z" fill="#111"/></svg>
<svg class="a" style="left:864px;top:593px" width="11" height="12" viewBox="0 0 11 12"><path d="M0.5 0.5v11L8 6z" fill="#111"/><rect x="8.3" y="0.5" width="2.2" height="11" fill="#111"/></svg>
<div class="a" style="left:881.5px;top:588px;width:53px;height:23px;background:#fff;border:1px solid #c8c8cc;border-radius:4px"></div>
<div class="t" style="left:888.5px;top:594px;font-size:12px;color:#222">30</div>
<svg class="a" style="left:921px;top:597px" width="8" height="5" viewBox="0 0 8 5"><path d="M0 0h8L4 5z" fill="#111"/></svg>
<div class="t" style="left:1267.5px;top:594px;font-size:11.2px;color:#222">1-30 Listeleniyor.Toplam 647</div>
<div class="a" style="left:210px;top:180px;width:361px;height:45px;border:3px solid #e3261c"></div>
<div class="a" style="left:578px;top:211.5px;width:140px;height:45px;background:#fff;box-shadow:1px 1px 4px rgba(0,0,0,0.35);border-radius:2px"></div>
<div class="t mi" style="left:600px;top:219.5px">Sil</div>
<div class="a" style="left:578px;top:235px;width:140px;height:19px;background:#3f7bb6"></div>
<div class="t mi" style="left:600px;top:239.1px;color:#fff">Güncelle</div>
<svg class="a" style="left:709px;top:241.5px" width="3" height="5" viewBox="0 0 3 5"><path d="M0 0l3 2.5L0 5z" fill="#fff"/></svg>
<div class="a" style="left:718px;top:96.5px;width:141px;height:456px;background:#fff;box-shadow:1px 1px 4px rgba(0,0,0,0.35);border-radius:2px"></div>
<div class="a" style="left:851px;top:97px;width:7.5px;height:455px;background:#c9c9d5;border-radius:4px"></div>
<div class="a" style="left:851px;top:203px;width:7.5px;height:349px;background:#a0a0a8;border-radius:4px"></div>
<div class="t mi" style="left:740px;top:103.20px">Hızlı Satış</div>
<div class="t mi" style="left:740px;top:122.90px">Raf Yeri</div>
<div class="t mi" style="left:740px;top:142.60px">Raf Gözü</div>
<div class="t mi" style="left:740px;top:162.30px">GTIP Numarası</div>
<div class="t mi" style="left:740px;top:182.00px">Asgari Miktar</div>
<div class="t mi" style="left:740px;top:201.70px">Özel Kod-1</div>
<div class="t mi" style="left:740px;top:221.40px">Özel Kod-2</div>
<div class="t mi" style="left:740px;top:241.10px">Özel Kod-3</div>
<div class="t mi" style="left:740px;top:260.80px">Özel Kod-4</div>
<div class="t mi" style="left:740px;top:280.50px">Özel Kod-5</div>
<div class="t mi" style="left:740px;top:300.20px">Özel Kod-6</div>
<div class="t mi" style="left:740px;top:319.90px">Özel Kod-7</div>
<div class="t mi" style="left:740px;top:339.60px">Özel Kod-8</div>
<div class="t mi" style="left:740px;top:359.30px">Özel Kod-9</div>
<div class="t mi" style="left:740px;top:379.00px">Özel Kod-10</div>
<div class="t mi" style="left:740px;top:398.70px">Kategoriler</div>
<div class="t mi" style="left:740px;top:418.40px">Raf Ömrü Gün</div>
<div class="t mi" style="left:740px;top:438.10px">Raf Ömrü Tarih</div>
<div class="t mi" style="left:740px;top:457.80px">B2B de Göster</div>
<div class="t mi" style="left:740px;top:477.50px">Plu Aktif</div>
<div class="t mi" style="left:740px;top:497.20px">Kare Barkod</div>
<div class="t mi" style="left:740px;top:516.90px">Medikal Ürün</div>
<div class="a" style="left:718px;top:531.5px;width:133px;height:19.8px;background:#3f7bb6"></div>
<div class="t mi" style="left:740px;top:536.60px;color:#fff">Çoklu Birim Takibi</div>
<div class="a" style="left:709.5px;top:525.5px;width:145.5px;height:29.5px;border:3px solid #e3261c"></div>
<div class="a" style="left:572px;top:232px;width:150px;height:29px;border:3px solid #e3261c"></div>
<div class="a" style="left:0;top:0;width:1439px;height:1px;background:#000"></div>
</div></body></html>
